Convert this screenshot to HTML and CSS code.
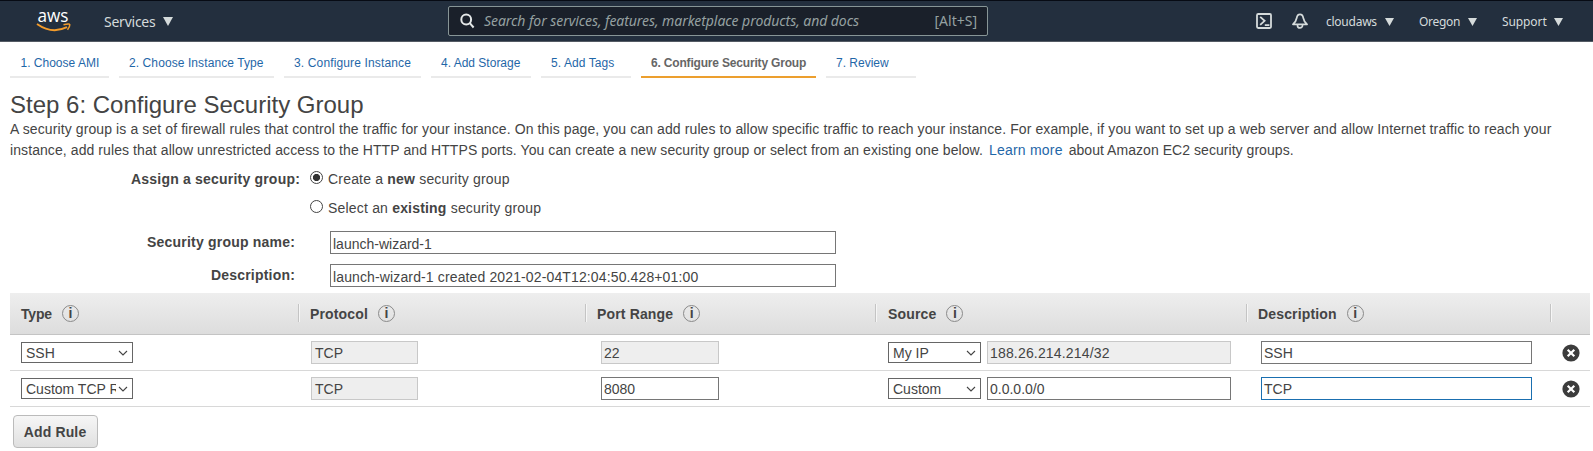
FILE: index.html
```html
<!DOCTYPE html>
<html lang="en">
<head>
<meta charset="utf-8">
<title>Step 6: Configure Security Group</title>
<link rel="stylesheet" href="styles.css">
</head>
<body>
<header class="nav">
  <svg class="logo" viewBox="0 0 36 24" width="36" height="24">
    <text class="logo-text" x="1.5" y="13" textLength="31" lengthAdjust="spacingAndGlyphs">aws</text>
    <path d="M1 15 Q16 25.500 31 18.200" fill="none" stroke="#f39c2b" stroke-width="1.900"/>
    <path d="M27.500 15.700 Q33.500 14.200 33.800 15.700 Q33.800 18 31.500 20.700" fill="none" stroke="#f39c2b" stroke-width="1.500"/>
  </svg>
  <div class="nav-item services"><span class="t">Services</span><i class="caret"></i></div>
  <div class="search">
    <svg width="16" height="16" viewBox="0 0 16 16" fill="none" stroke="#e4e8e8" stroke-width="2"><circle cx="6.2" cy="6.5" r="4.900"/><path d="M9.800 10.200l3.800 4.300"/></svg>
    <span class="t search-hint">Search for services, features, marketplace products, and docs</span>
    <span class="t search-key">[Alt+S]</span>
  </div>
  <svg class="shell" width="16" height="16" viewBox="0 0 16 16" fill="none" stroke="#d5dbdb" stroke-width="1.800"><rect x="1" y="1" width="14" height="14" rx="1.200"/><path d="M4.200 3.800l4.400 4-4.400 4M8.800 12.200h4.600"/></svg>
  <svg class="bell" width="16" height="16" viewBox="0 0 16 16" fill="none" stroke="#d5dbdb" stroke-width="1.700" stroke-linejoin="round"><path d="M8 1.300C6 1.300 5 3 4.700 5 4.200 8.200 3 9.500 .9 11.300H15.100C13 9.500 11.800 8.200 11.300 5 11 3 10 1.300 8 1.300zM5.500 11.500V12.400a2.500 2.500 0 0 0 5 0V11.500"/></svg>
  <div class="nav-item account"><span class="t">cloudaws</span><i class="caret small"></i></div>
  <div class="nav-item region"><span class="t">Oregon</span><i class="caret small"></i></div>
  <div class="nav-item support"><span class="t">Support</span><i class="caret small"></i></div>
</header>
<nav class="steps">
  <a class="step s1">1. Choose AMI</a>
  <a class="step s2">2. Choose Instance Type</a>
  <a class="step s3">3. Configure Instance</a>
  <a class="step s4">4. Add Storage</a>
  <a class="step s5">5. Add Tags</a>
  <a class="step s6 current">6. Configure Security Group</a>
  <a class="step s7">7. Review</a>
</nav>
<main>
  <h1>Step 6: Configure Security Group</h1>
  <p class="intro"><span class="t line1">A security group is a set of firewall rules that control the traffic for your instance. On this page, you can add rules to allow specific traffic to reach your instance. For example, if you want to set up a web server and allow Internet traffic to reach your</span><br><span class="t line2">instance, add rules that allow unrestricted access to the HTTP and HTTPS ports. You can create a new security group or select from an existing one below.</span><a class="t more">Learn more</a><span class="t tail">about Amazon EC2 security groups.</span></p>
  <section class="form">
    <div class="choice"><b class="label">Assign a security group:</b><i class="radio on"></i><span class="t">Create a <b>new</b> security group</span></div>
    <div class="choice second"><b class="label"></b><i class="radio"></i><span class="t">Select an <b>existing</b> security group</span></div>
    <div class="field"><b class="label">Security group name:</b><div class="input"><span class="t">launch-wizard-1</span></div></div>
    <div class="field"><b class="label">Description:</b><div class="input"><span class="t long">launch-wizard-1 created 2021-02-04T12:04:50.428+01:00</span></div></div>
  </section>
  <section class="rules">
    <div class="row head">
      <div class="cell type"><span class="t">Type</span><i class="info">i</i></div>
      <div class="cell"><span class="t">Protocol</span><i class="info">i</i></div>
      <div class="cell"><span class="t">Port Range</span><i class="info">i</i></div>
      <div class="cell source"><span class="t">Source</span><i class="info">i</i></div>
      <div class="cell"><span class="t">Description</span><i class="info">i</i></div>
      <div class="cell"></div>
    </div>
    <div class="row">
      <div class="cell"><div class="select"><span class="t">SSH</span><svg width="10" height="6" viewBox="0 0 10 6"><path d="M1 1l4 4 4-4"/></svg></div></div>
      <div class="cell proto"><div class="input off"><span class="t">TCP</span></div></div>
      <div class="cell port"><div class="input off"><span class="t">22</span></div></div>
      <div class="cell origin"><div class="select"><span class="t">My IP</span><svg width="10" height="6" viewBox="0 0 10 6"><path d="M1 1l4 4 4-4"/></svg></div><div class="input off"><span class="t ip">188.26.214.214/32</span></div></div>
      <div class="cell desc"><div class="input"><span class="t">SSH</span></div></div>
      <div class="cell remove"><svg width="18" height="18" viewBox="0 0 18 18"><circle cx="9" cy="9" r="8.600"/><path d="M5.700 5.700l6.600 6.600M12.300 5.700l-6.600 6.600"/></svg></div>
    </div>
    <div class="row">
      <div class="cell"><div class="select"><span class="t">Custom TCP Rule</span><svg width="10" height="6" viewBox="0 0 10 6"><path d="M1 1l4 4 4-4"/></svg></div></div>
      <div class="cell proto"><div class="input off"><span class="t">TCP</span></div></div>
      <div class="cell port"><div class="input"><span class="t">8080</span></div></div>
      <div class="cell origin"><div class="select"><span class="t">Custom</span><svg width="10" height="6" viewBox="0 0 10 6"><path d="M1 1l4 4 4-4"/></svg></div><div class="input"><span class="t">0.0.0.0/0</span></div></div>
      <div class="cell desc"><div class="input focus"><span class="t">TCP</span></div></div>
      <div class="cell remove"><svg width="18" height="18" viewBox="0 0 18 18"><circle cx="9" cy="9" r="8.600"/><path d="M5.700 5.700l6.600 6.600M12.300 5.700l-6.600 6.600"/></svg></div>
    </div>
  </section>
  <button class="add">Add Rule</button>
</main>
</body>
</html>
```
FILE: styles.css
```css
* { box-sizing: border-box; }
body { margin: 0; width: 1593px; height: 451px; overflow: hidden; background: #fff; color: #444; font: 14px/20px "Liberation Sans", Arial, sans-serif; }
i { font-style: normal; }
.t { white-space: nowrap; }

.nav { display: flex; align-items: center; height: 42px; background: #232f3e; border-top: 1px solid #070b14; border-bottom: 1px solid #545b64; color: #d5dbdb; font-family: "Noto Sans", sans-serif; font-size: 12px; }
.logo { margin-left: 36px; flex: none; overflow: visible; }
.logo-text { font: 500 17.5px "Open Sans", sans-serif; fill: #fff; }
.nav-item { display: flex; align-items: center; justify-content: space-between; flex: none; padding-top: 1px; }
.services { width: 69px; margin-left: 32px; font-size: 14px; letter-spacing: -0.24px; }
.caret { width: 10px; height: 9px; background: #d5dbdb; clip-path: polygon(0 0, 100% 0, 50% 100%); }
.caret.small { width: 9px; height: 8px; margin-top: 1px; }
.search { display: flex; align-items: center; width: 540px; height: 30px; margin-left: 275px; padding: 0 10px 0 11px; background: #1a202a; border: 1px solid #879596; border-radius: 2px; color: #95a0a1; font-size: 14px; }
.search-hint { margin-left: 8px; font-style: italic; letter-spacing: -0.06px; }
.search-key { margin-left: auto; }
.shell { margin-left: 268px; }
.bell { margin-left: 20px; }
.account { width: 68px; margin-left: 18px; letter-spacing: -0.25px; }
.region { width: 58px; margin-left: 25px; letter-spacing: -0.3px; }
.support { width: 61px; margin-left: 25px; letter-spacing: -0.1px; }

.steps { display: flex; gap: 10px; height: 36px; padding-left: 10px; font-size: 12px; }
.step { height: 36px; padding: 11px 0 0 10px; border-bottom: 2px solid #eaeaea; color: #1f67a8; white-space: nowrap; }
.s1 { width: 99px; padding-left: 10.5px; }
.s2 { width: 155px; letter-spacing: 0.09px; }
.s3 { width: 137px; letter-spacing: 0.14px; }
.s4 { width: 100px; }
.s5 { width: 90px; letter-spacing: 0.08px; }
.s6 { width: 175px; letter-spacing: -0.18px; }
.s7 { width: 90px; }
.current { border-color: #ec9f2e; color: #666; font-weight: bold; }

main { padding-left: 10px; }
h1 { margin: 13px 0 0; font-size: 24px; line-height: 28px; font-weight: normal; }
.intro { margin: 0; line-height: 20.5px; }
.line1 { letter-spacing: 0.105px; }
.line2 { letter-spacing: 0.085px; }
.more { margin: 0 6px; color: #1f67a8; letter-spacing: 0.2px; }
.tail { letter-spacing: 0.05px; }
.form { height: 133px; padding-top: 9px; }
.choice { display: flex; height: 20px; letter-spacing: 0.19px; }
.choice .label { width: 290px; }
.second { margin-top: 9px; }
.label { width: 285px; text-align: right; letter-spacing: 0.2px; }
.radio { width: 13px; height: 13px; margin: 2px 5px 0 10px; border: 1px solid #444; border-radius: 50%; }
.on { background: radial-gradient(circle, #333 3.2px, #fff 4px); }
.field { display: flex; gap: 35px; height: 33px; }
.field .label { padding-top: 1px; }
.second + .field { margin-top: 13px; }
.input { display: flex; align-items: center; height: 23px; padding: 1px 0 0 2px; border: 1px solid #767676; background: #fff; overflow: hidden; }
.field .input { width: 506px; padding-top: 2px; }
.long { letter-spacing: 0.13px; }
.off { background: #eee; border-color: #c8c8c8; }
.focus { border-color: #1a6fb0; }

.rules { width: 1580px; }
.row { display: grid; grid-template-columns: 288px 287px 290px 371px 304px 40px; height: 36px; border-bottom: 1px solid #d8d8d8; }
.cell { display: flex; align-items: center; padding-left: 11px; }
.head { height: 42px; background: linear-gradient(#eee, #ddd); border-color: #c4c4c4; font-weight: bold; letter-spacing: 0.15px; }
.head .cell { height: 18px; margin-top: 11px; }
.head .t { padding-top: 2px; }
.head .cell + .cell { border-left: 1px solid #c4c4c4; box-shadow: inset 1px 0 #f6f6f6; }
.head .source { padding-left: 12px; }
.info { width: 17px; height: 17px; margin-left: 10px; border: 1px solid #8a8a8a; border-radius: 50%; text-align: center; font-size: 14px; line-height: 15px; letter-spacing: 0; }
.type { letter-spacing: -0.2px; }
.select { display: flex; align-items: center; justify-content: space-between; width: 112px; height: 21px; padding: 0 4px; border: 1px solid #666; overflow: hidden; }
.select .t { overflow: hidden; margin-right: 2px; }
.select svg { flex: none; fill: none; stroke: #444; stroke-width: 1.1; }
.row .input { width: 107px; }
.row .proto { padding-left: 13px; }
.proto .input { padding-left: 3px; }
.row .port { padding-left: 16px; }
.row .port .input { width: 118px; }
.row .origin { padding-left: 13px; gap: 6px; }
.origin .select { width: 93px; }
.row .origin .input { width: 244px; }
.ip { letter-spacing: 0.17px; }
.row .desc { padding-left: 15px; }
.row .desc .input { width: 271px; }
.row .remove { padding-left: 12px; }
.remove svg { fill: #3c3c3c; }
.remove path { stroke: #fff; stroke-width: 2.2; }
.add { display: block; width: 85px; height: 33px; margin: 8px 0 0 3px; padding: 0 1px 0 0; border: 1px solid #bbb; border-radius: 4px; background: linear-gradient(#f6f6f6, #e0e0e0); color: #444; font: bold 14px "Liberation Sans", sans-serif; letter-spacing: 0.15px; }
```
